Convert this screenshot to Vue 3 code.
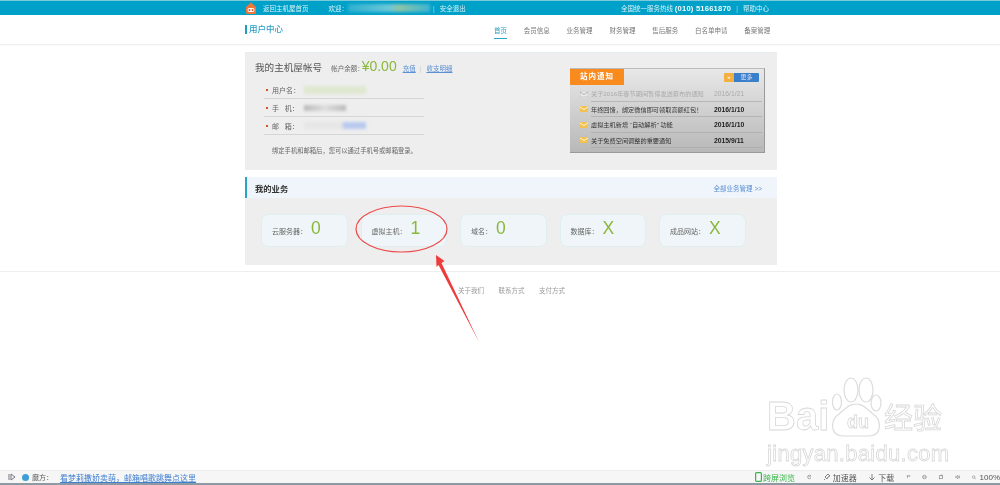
<template>
  <div class="page">
    <!-- top bar -->
    <div class="topbar">
      <div class="top-left">
        <svg class="logo" viewBox="0 0 10 12" width="10" height="12">
          <path d="M5 0 L6 1.500 L10 5 V10.500 Q10 12 8.500 12 H1.500 Q0 12 0 10.500 V5 L4 1.500 Z" fill="#f0763a" />
          <rect x="1.500" y="6" width="7" height="4" rx="2" fill="#fff" />
          <circle cx="3.500" cy="8" r="1" fill="#c9502a" />
          <circle cx="6.500" cy="8" r="1" fill="#c9502a" />
        </svg>
        <span class="home-link">返回主机屋首页</span>
        <span class="welcome">欢迎：</span>
        <span class="smudge top-smudge"></span>
        <span class="sep">|</span>
        <span>安全退出</span>
      </div>
      <div class="top-right">
        <span>全国统一服务热线 <b>(010) 51661870</b></span>
        <span class="sep">|</span>
        <span>帮助中心</span>
      </div>
    </div>

    <!-- header -->
    <div class="header">
      <div class="brand">用户中心</div>
      <nav class="nav">
        <a v-for="n in navs" :key="n" :class="{ active: n === '首页' }">{{ n }}</a>
      </nav>
    </div>

    <div class="main">
      <!-- account panel -->
      <section class="account">
        <div class="account-left">
          <div class="account-head">
            <h2>我的主机屋帐号</h2>
            <span class="bal-label">帐户余额：</span>
            <span class="bal">¥0.00</span>
            <a class="blue charge">充值</a>
            <span class="bar">|</span>
            <a class="blue">收支明细</a>
          </div>
          <ul class="info">
            <li>
              <i></i><span class="info-label">用户名：</span>
              <span class="smudge s-green"></span>
            </li>
            <li>
              <i></i><span class="info-label">手&nbsp;&nbsp;&nbsp;机：</span>
              <span class="smudge s-gray"></span>
            </li>
            <li>
              <i></i><span class="info-label">邮&nbsp;&nbsp;&nbsp;箱：</span>
              <span class="smudge s-blue"></span>
            </li>
          </ul>
          <p class="note">绑定手机和邮箱后，您可以通过手机号或邮箱登录。</p>
        </div>

        <div class="notice">
          <div class="notice-head">
            <span class="notice-title">站内通知</span>
            <span class="more"><em>»</em><b>更多</b></span>
          </div>
          <div
            v-for="r in notices"
            :key="r.title"
            class="notice-row"
            :class="{ read: r.read }"
          >
            <svg viewBox="0 0 8 6" width="8" height="6" class="mail">
              <rect width="8" height="6" rx="1" :fill="r.read ? '#e8e8e8' : '#f2c14e'" :stroke="r.read ? '#aaa' : 'none'" stroke-width=".5" />
              <path d="M0 1 L4 3.500 L8 1" fill="none" :stroke="r.read ? '#aaa' : '#fff'" stroke-width=".8" />
            </svg>
            <span class="n-title">{{ r.title }}</span>
            <span class="n-date">{{ r.date }}</span>
          </div>
        </div>
      </section>

      <!-- business -->
      <section class="biz">
        <div class="biz-head">
          <strong>我的业务</strong>
          <a class="blue">全部业务管理 &gt;&gt;</a>
        </div>
        <div class="biz-body">
          <div v-for="c in cards" :key="c.label" class="card">
            <span class="card-label">{{ c.label }}：</span>
            <span class="card-num">{{ c.value }}</span>
          </div>
        </div>
      </section>
    </div>

    <!-- footer -->
    <footer class="foot">
      <a>关于我们</a>
      <a>联系方式</a>
      <a>支付方式</a>
    </footer>

    <!-- browser status bar -->
    <div class="status">
      <div class="status-left">
        <svg viewBox="0 0 8 8" width="8" height="8"><path d="M1 1 V7 M3 1 L7 4 L3 7 Z" fill="none" stroke="#667" stroke-width=".9" /></svg>
        <span class="globe"></span>
        <span>魔方：</span>
        <a class="status-link">看梦莉撒娇卖萌，邮箱唱歌跳舞点这里</a>
      </div>
      <div class="status-right">
        <span class="green">
          <svg viewBox="0 0 7 10" width="7" height="10"><rect x=".6" y=".6" width="5.800" height="8.800" rx="1" fill="none" stroke="#3bb54a" stroke-width="1.200" /></svg>
          跨屏浏览
        </span>
        <svg viewBox="0 0 8 8" width="8" height="8"><circle cx="4" cy="4" r="3" fill="none" stroke="#666" stroke-width=".8" /><path d="M2 4 L6 2" stroke="#666" stroke-width=".8" /></svg>
        <span class="with-icon">
          <svg viewBox="0 0 8 8" width="8" height="8"><path d="M5 1 L7 3 L5 4 L4 6 L2 4 L3 3 Z M2 6 L1 7" fill="none" stroke="#666" stroke-width=".8" /></svg>
          加速器
        </span>
        <span class="with-icon">
          <svg viewBox="0 0 8 8" width="8" height="8"><path d="M4 1 V7 M1.500 4.500 L4 7 L6.500 4.500" fill="none" stroke="#666" stroke-width=".8" /></svg>
          下载
        </span>
        <svg viewBox="0 0 8 8" width="8" height="8"><path d="M1 2 H7 M2.500 2 V6 M5.500 2 V4" fill="none" stroke="#666" stroke-width=".8" /></svg>
        <svg viewBox="0 0 8 8" width="8" height="8"><circle cx="4" cy="4" r="3" fill="none" stroke="#666" stroke-width=".8" /><path d="M1 4 H7" stroke="#666" stroke-width=".8" /></svg>
        <svg viewBox="0 0 8 8" width="8" height="8"><rect x="1" y="2" width="5" height="5" fill="none" stroke="#666" stroke-width=".8" /><path d="M3 2 V1 H7 V5 H6" fill="none" stroke="#666" stroke-width=".8" /></svg>
        <svg viewBox="0 0 9 8" width="9" height="8"><path d="M1 3 H2.500 L4.500 1.200 V6.800 L2.500 5 H1 Z M6 2.500 Q7 4 6 5.500 M7.200 1.500 Q8.800 4 7.200 6.500" fill="none" stroke="#666" stroke-width=".8" /></svg>
        <svg viewBox="0 0 8 8" width="7" height="7"><circle cx="3.200" cy="3.200" r="2.400" fill="none" stroke="#666" stroke-width=".8" /><path d="M5 5 L7.400 7.400" stroke="#666" stroke-width=".8" /></svg>
        <span class="zoom-num">100%</span>
      </div>
    </div>

    <!-- annotation drawn over the shot -->
    <svg class="annot" viewBox="0 0 1000 485" width="1000" height="485">
      <ellipse cx="401.500" cy="229" rx="45.500" ry="23" fill="none" stroke="#ee4a4a" stroke-width="1.200" />
      <polygon points="436,255 444.500,261 441.500,263 479,342 438.500,265 436.500,267" fill="#ee3b3b" />
    </svg>

    <!-- watermark -->
    <div class="mark">
      <div class="mark-top">
        <span class="mark-word">Bai</span>
        <svg class="paw" viewBox="0 0 52 60" width="52" height="60">
          <g fill="#fff" stroke="#dcdcdc" stroke-width="1.200">
            <ellipse cx="5" cy="25" rx="4.500" ry="8" />
            <ellipse cx="19" cy="13" rx="7" ry="12" />
            <ellipse cx="34" cy="13" rx="7" ry="12" />
            <ellipse cx="44" cy="26" rx="5" ry="8" />
            <path d="M24 27 C32 27 36 33 41 37 C50 43 50 58 38 59 L10 59 C-2 58 -2 43 7 37 C12 33 16 27 24 27 Z" />
          </g>
        </svg>
        <span class="mark-du">du</span>
        <span class="mark-cn">经验</span>
      </div>
      <div class="mark-url">jingyan.baidu.com</div>
    </div>
  </div>
</template>

<script setup>
const navs = ["首页", "会员信息", "业务管理", "财务管理", "售后服务", "白名单申请", "备案管理"];

const notices = [
  { title: "关于2016年春节期间暂停发送幕布的通知", date: "2016/1/21", read: true },
  { title: "年终回馈，绑定微信即可领取高额红包！", date: "2016/1/10" },
  { title: "虚拟主机新增 “自动解析” 功能", date: "2016/1/10" },
  { title: "关于免费空间调整的重要通知", date: "2015/9/11" },
];

const cards = [
  { label: "云服务器", value: "0" },
  { label: "虚拟主机", value: "1" },
  { label: "域名", value: "0" },
  { label: "数据库", value: "X" },
  { label: "成品网站", value: "X" },
];
</script>

<style>
html,
body {
  margin: 0;
  background: #fff;
}
</style>

<style scoped>
.page {
  position: relative;
  width: 1000px;
  height: 485px;
  overflow: hidden;
  display: flex;
  flex-direction: column;
  background: #fff;
  font-family: "Liberation Sans", "Noto Sans CJK SC", sans-serif;
  font-size: 6.500px;
  color: #666;
  filter: blur(0.3px);
}

/* 顶栏 */
.topbar {
  height: 15px;
  box-sizing: border-box;
  border-top: 1px solid #7cc9dc;
  background: #00a1c8;
  color: #d6f0f6;
  display: flex;
  justify-content: space-between;
  align-items: center;
  padding: 0 231px 0 246px;
  flex: none;
}
.top-left,
.top-right {
  display: flex;
  align-items: center;
}
.logo {
  margin-right: 7px;
}
.home-link {
  margin-right: 20px;
}
.top-smudge {
  width: 82px;
  height: 8px;
  margin-right: -2px;
  background: linear-gradient(90deg, #2cb0d0, #6cc6d8 50%, #8cc4a8 62%, #3eb4d2);
}
.sep {
  margin: 0 5px;
  opacity: 0.7;
}
.top-right b {
  color: #eefafc;
  font-size: 7.600px;
  letter-spacing: 0.2px;
}

.smudge {
  display: inline-block;
  filter: blur(1.500px);
}

/* 头部 */
.header {
  height: 29px;
  flex: none;
  display: flex;
  align-items: center;
  box-shadow: 0 1px 1px #eee;
  padding-left: 245px;
}
.brand {
  border-left: 2px solid #1a9dc0;
  padding-left: 2px;
  font-size: 8.500px;
  font-weight: 500;
  line-height: 9px;
  color: #2ba0c2;
  margin-right: 211px;
}
.nav {
  display: flex;
  gap: 16.800px;
  align-self: stretch;
  align-items: center;
}
.nav a {
  height: 100%;
  box-sizing: border-box;
  display: flex;
  align-items: center;
  color: #777;
  border-bottom: 1px solid transparent;
  margin-bottom: -1px;
}
.nav a.active {
  color: #2ba0c2;
  height: 23px;
  margin-top: -6px;
  padding-top: 6px;
  border-bottom-color: #27a6c8;
}

/* 主体 */
.main {
  width: 532px;
  margin: 8px 0 0 245px;
  flex: none;
}
.account {
  height: 118px;
  background: #eee;
  border-top: 1px solid #e6eef2;
  box-sizing: border-box;
  display: flex;
  padding: 5px 12px 0 10px;
  justify-content: space-between;
}
.account-left {
  width: 198px;
}
.account-head {
  display: flex;
  align-items: baseline;
  white-space: nowrap;
  height: 20px;
}
.account-head h2 {
  margin: 0 9px 0 0;
  font-size: 9.600px;
  font-weight: normal;
  color: #555;
}
.bal {
  font-size: 14px;
  color: #8ab83c;
  margin: 0 6px 0 -2px;
}
.charge {
  margin-right: 4px;
}
.bar {
  color: #ccc;
  margin-right: 5px;
}
.blue {
  color: #5b8fd6;
}
.account-head .blue {
  text-decoration: underline;
}
.info {
  list-style: none;
  margin: 3px 0 0 9px;
  padding: 0;
  width: 160px;
}
.info li {
  height: 18px;
  box-sizing: border-box;
  border-bottom: 1px solid #d6d6d6;
  display: flex;
  align-items: center;
  color: #666;
  font-size: 7px;
}
.info i {
  width: 2px;
  height: 2px;
  background: #d2502a;
  margin: 0 4px 0 2px;
}
.info-label {
  width: 32px;
  white-space: nowrap;
}
.s-green {
  width: 62px;
  height: 8px;
  background: #dfe8d0;
}
.s-gray {
  width: 42px;
  height: 6px;
  background: linear-gradient(90deg, #bbb, #ddd 50%, #bbb);
}
.s-blue {
  width: 62px;
  height: 7px;
  background: linear-gradient(90deg, #e6e6e6 60%, #b9c9ee 65%);
}
.note {
  margin: 11px 0 0 17px;
  white-space: nowrap;
  color: #666;
  font-size: 6.300px;
}

/* 站内通知 */
.notice {
  width: 195px;
  height: 85px;
  margin-top: 10px;
  box-sizing: border-box;
  background: linear-gradient(#e8e8e8, #b8b8b8);
  border-right: 1px solid #999;
  border-bottom: 1px solid #999;
  border-top: 1px solid #bbb;
  flex: none;
}
.notice-head {
  height: 16px;
  display: flex;
  justify-content: space-between;
  align-items: center;
  padding-right: 5px;
  margin-bottom: 1px;
}
.notice-title {
  width: 54px;
  height: 16px;
  line-height: 16px;
  background: #f98a1e;
  color: #fff;
  font-size: 7.500px;
  font-weight: bold;
  text-align: center;
  letter-spacing: 1px;
}
.more {
  display: flex;
  height: 9px;
  line-height: 9px;
  font-size: 6px;
}
.more em {
  width: 10px;
  background: #f3b041;
  color: #fff;
  font-style: normal;
  text-align: center;
  border-radius: 1px 0 0 1px;
}
.more b {
  width: 25px;
  background: #3a7fcc;
  color: #dde;
  font-weight: normal;
  text-align: center;
  border-radius: 0 1px 1px 0;
}
.notice-row {
  height: 15.500px;
  display: flex;
  align-items: center;
  margin-left: 10px;
  position: relative;
  color: #333;
}
.notice-row .mail {
  margin-right: 3px;
  flex: none;
}
.n-title {
  width: 123px;
  white-space: nowrap;
  font-size: 6.200px;
  border: 0;
}
.n-date {
  font-weight: bold;
  color: #222;
  font-size: 6.800px;
}
.notice-row.read .n-title,
.notice-row.read .n-date {
  color: #aaa;
  font-weight: normal;
}
.notice-row::after {
  content: "";
  position: absolute;
  left: 11px;
  right: 2px;
  bottom: 0;
  height: 1px;
  background: #aaa;
  opacity: 0.7;
}

/* 我的业务 */
.biz {
  margin-top: 7px;
}
.biz-head {
  height: 21px;
  background: #eff5fa;
  border-left: 2px solid #28a5c6;
  box-sizing: border-box;
  display: flex;
  justify-content: space-between;
  align-items: center;
  padding: 0 15px 0 8px;
}
.biz-head strong {
  font-size: 8.300px;
  color: #333;
}
.biz-body {
  height: 67px;
  background: #eee;
  box-sizing: border-box;
  display: flex;
  gap: 13px;
  padding: 16px 0 0 16px;
}
.card {
  width: 86.500px;
  height: 33px;
  box-sizing: border-box;
  background: #eff5f8;
  border: 1px solid #dfeeee;
  border-radius: 7px;
  padding-left: 10px;
  display: flex;
  align-items: center;
  white-space: nowrap;
}
.card-label {
  color: #666;
  font-size: 7px;
}
.card-num {
  font-size: 17.500px;
  line-height: 17px;
  margin: -4px 0 0 4px;
  color: #8ab83c;
}

/* 页脚 */
.foot {
  margin-top: 6px;
  border-top: 1px solid #eee;
  padding: 13px 0 0 458px;
  display: flex;
  gap: 14.500px;
  color: #999;
  flex: none;
}

/* 浏览器状态栏 */
.status {
  margin-top: auto;
  height: 15px;
  box-sizing: border-box;
  flex: none;
  background: #f6f6f6;
  border-top: 1px solid #ececec;
  border-bottom: 2px solid #8d9aa3;
  display: flex;
  justify-content: space-between;
  align-items: center;
  padding: 0 0 0 8px;
  color: #555;
  font-size: 7px;
  white-space: nowrap;
}
.status-left {
  display: flex;
  align-items: center;
}
.globe {
  width: 7px;
  height: 7px;
  border-radius: 50%;
  background: #3d9fd6;
  margin: 0 3px 0 6px;
}
.status-link {
  margin-left: 7px;
  color: #3f7fd0;
  font-size: 8px;
  text-decoration: underline;
}
.status-right {
  display: flex;
  align-items: center;
  gap: 11.500px;
  width: 245px;
  overflow: hidden;
  flex: none;
  font-size: 8px;
}
.green {
  display: flex;
  align-items: center;
  gap: 1px;
  color: #3bb54a;
}
.with-icon {
  display: flex;
  align-items: center;
  gap: 2px;
}
.zoom-num {
  margin-left: -8px;
}

/* 标注与水印 */
.annot {
  position: absolute;
  left: 0;
  top: 0;
  pointer-events: none;
}
.mark {
  position: absolute;
  left: 767px;
  top: 377px;
  width: 182px;
  color: #fff;
  pointer-events: none;
  -webkit-text-stroke: 0.8px #d8d8d8;
}
.mark-top {
  display: flex;
  align-items: flex-end;
  height: 60px;
}
.mark-word {
  font-size: 40px;
  font-weight: bold;
  line-height: 41px;
  width: 65px;
}
.paw {
  flex: none;
}
.mark-du {
  position: absolute;
  left: 74px;
  top: 35px;
  font-size: 18px;
  font-weight: bold;
  line-height: 20px;
  width: 34px;
  text-align: center;
}
.mark-cn {
  font-size: 29px;
  line-height: 36px;
  white-space: nowrap;
}
.mark-url {
  font-size: 22px;
  line-height: 24px;
  margin-top: 5px;
  white-space: nowrap;
  letter-spacing: 0.3px;
}
</style>
